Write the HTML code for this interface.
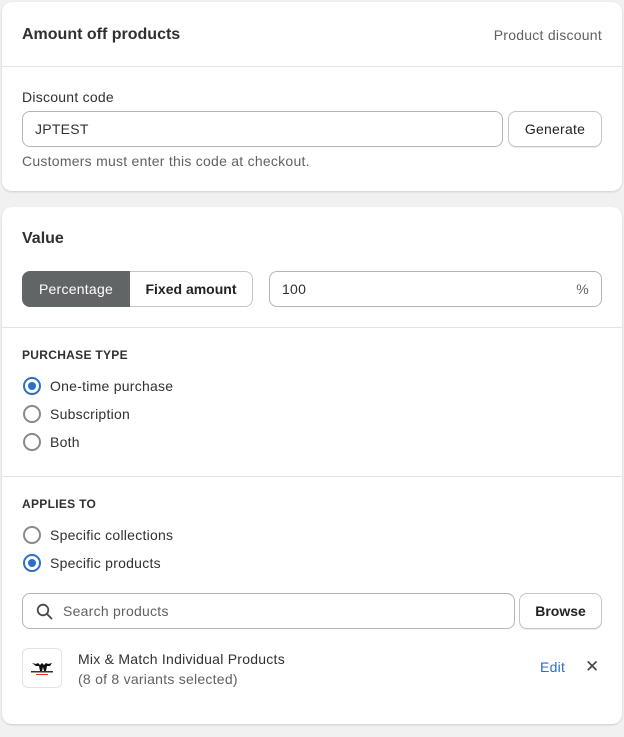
<!DOCTYPE html>
<html><head><style>
*{box-sizing:border-box;margin:0;padding:0}
body{width:624px;height:737px;background:#f1f1f1;font-family:"Liberation Sans",sans-serif;color:#303030;font-size:14px;position:relative;overflow:hidden;letter-spacing:.25px}
.card{position:absolute;left:2px;width:620px;background:#fff;border-radius:10px;box-shadow:0 1px 2px rgba(0,0,0,.15)}
.a{position:absolute}
.hr{position:absolute;left:0;right:0;height:1px;background:#e3e3e3}
.inp{position:absolute;border:1px solid #b5b5b5;border-radius:8px;background:#fff}
.btn{position:absolute;border:1px solid #c5c5c5;border-radius:8px;background:#fff;font-weight:bold;text-align:center;box-shadow:0 1px 0 rgba(0,0,0,.08);letter-spacing:0}
.radio{position:absolute;width:18px;height:18px;border-radius:50%;border:2px solid #8a8a8a}
.radio.on{border-color:#2c6ecb}
.radio.on::after{content:"";position:absolute;left:3px;top:3px;width:8px;height:8px;border-radius:50%;background:#2c6ecb}
.h{font-size:12px;font-weight:bold;letter-spacing:.3px}
b,.bold{letter-spacing:0}
</style></head><body>
<div class="card" style="top:2px;height:189px">
 <div class="a" style="left:20px;top:24px;font-size:16px;font-weight:bold;letter-spacing:0">Amount off products</div>
 <div class="a" style="right:20px;top:25px;color:#616161;font-size:14px">Product discount</div>
 <div class="hr" style="top:64px"></div>
 <div class="a" style="left:20px;top:87px">Discount code</div>
 <div class="inp" style="left:20px;top:109px;width:481px;height:36px"><span class="a" style="left:12px;top:9px">JPTEST</span></div>
 <div class="btn" style="left:506px;top:109px;width:94px;height:36px;line-height:34px;font-weight:normal;color:#222;letter-spacing:.25px">Generate</div>
 <div class="a" style="left:20px;top:151px;color:#616161;font-size:14px">Customers must enter this code at checkout.</div>
</div>
<div class="card" style="top:207px;height:517px">
 <div class="a" style="left:20px;top:23px;font-size:16px;font-weight:bold;letter-spacing:0">Value</div>
 <div class="a" style="left:20px;top:64px;width:108px;height:36px;background:#616566;border-radius:8px 0 0 8px;color:#fff;text-align:center;line-height:36px">Percentage</div>
 <div class="a" style="left:128px;top:64px;width:123px;height:36px;border:1px solid #c5c5c5;border-left:none;border-radius:0 8px 8px 0;text-align:center;line-height:34px;font-weight:bold;color:#222;letter-spacing:0">Fixed amount</div>
 <div class="inp" style="left:267px;top:64px;width:333px;height:36px"><span class="a" style="left:12px;top:9px">100</span><span class="a" style="right:12px;top:9px;color:#616161">%</span></div>
 <div class="hr" style="top:120px"></div>
 <div class="a h" style="left:20px;top:141px">PURCHASE TYPE</div>
 <div class="radio on" style="left:21px;top:170px"></div><div class="a" style="left:48px;top:171px">One-time purchase</div>
 <div class="radio" style="left:21px;top:198px"></div><div class="a" style="left:48px;top:199px">Subscription</div>
 <div class="radio" style="left:21px;top:226px"></div><div class="a" style="left:48px;top:227px">Both</div>
 <div class="hr" style="top:269px"></div>
 <div class="a h" style="left:20px;top:290px">APPLIES TO</div>
 <div class="radio" style="left:21px;top:319px"></div><div class="a" style="left:48px;top:320px">Specific collections</div>
 <div class="radio on" style="left:21px;top:347px"></div><div class="a" style="left:48px;top:348px">Specific products</div>
 <div class="inp" style="left:20px;top:386px;width:493px;height:36px">
  <svg class="a" style="left:13px;top:9px" width="17" height="17" viewBox="0 0 17 17"><circle cx="7" cy="7" r="5.3" fill="none" stroke="#4a4a4a" stroke-width="1.8"/><path d="M11 11l4.5 4.5" stroke="#4a4a4a" stroke-width="1.9" stroke-linecap="round"/></svg>
  <span class="a" style="left:40px;top:9px;color:#616161">Search products</span></div>
 <div class="btn" style="left:517px;top:386px;width:83px;height:36px;line-height:34px;color:#222">Browse</div>
 <div class="a" style="left:20px;top:441px;width:40px;height:40px;border:1px solid #e3e3e3;border-radius:6px;overflow:hidden">
  <svg width="38" height="38" viewBox="0 0 38 38"><path d="M9 14l4 1 2-1 2 2 2-2 2 2 2-2 2 1 4-1-2 3h-3l-1 5h-2l-1-4-1 4h-2l-1-5h-3z" fill="#111"/><rect x="8" y="22" width="22" height="1.5" fill="#333"/><rect x="13" y="25" width="12" height="1" fill="#d33"/></svg>
 </div>
 <div class="a" style="left:76px;top:444px">Mix &amp; Match Individual Products</div>
 <div class="a" style="left:76px;top:464px;color:#616161">(8 of 8 variants selected)</div>
 <div class="a" style="left:538px;top:452px;color:#2c6ecb">Edit</div>
 <div class="a" style="left:583px;top:450px;font-size:17px;color:#444">✕</div>
</div>
</body></html>
